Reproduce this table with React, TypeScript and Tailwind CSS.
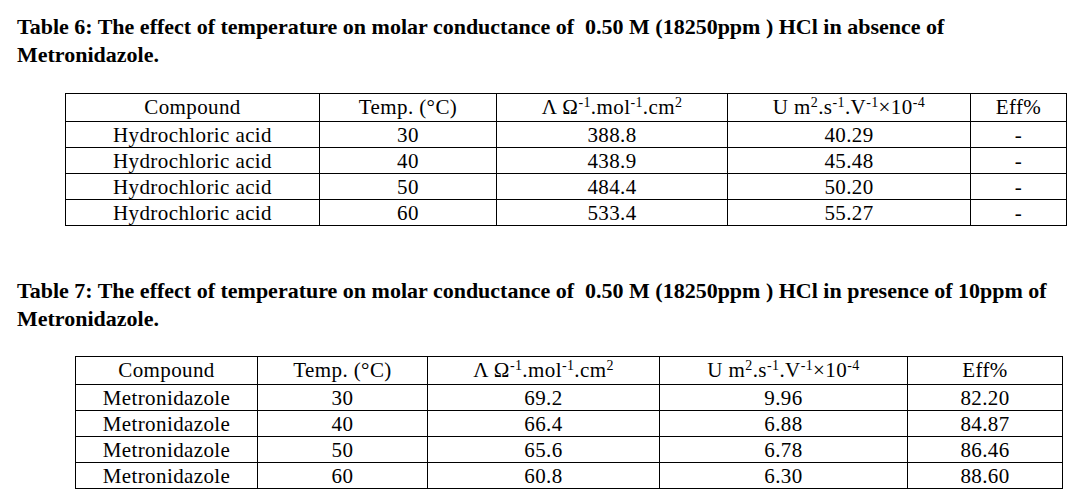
import React from "react";

type Row = [string, string, string, string, string];

const Head = ({ widths }: { widths: string[] }) => (
  <>
    <colgroup>
      {widths.map((w, i) => (
        <col key={i} className={w} />
      ))}
    </colgroup>
    <thead>
      <tr className="h-[28px]">
        <th className="border border-black font-normal p-0 pb-[2px]">Compound</th>
        <th className="border border-black font-normal p-0 pb-[2px]">Temp. (°C)</th>
        <th className="border border-black font-normal p-0 pb-[2px]">
          Λ Ω<sup className="text-[14px]">-1</sup>.mol<sup className="text-[14px]">-1</sup>.cm
          <sup className="text-[14px]">2</sup>
        </th>
        <th className="border border-black font-normal p-0 pb-[2px]">
          U m<sup className="text-[14px]">2</sup>.s<sup className="text-[14px]">-1</sup>.V
          <sup className="text-[14px]">-1</sup>×10<sup className="text-[14px]">-4</sup>
        </th>
        <th className="border border-black font-normal p-0 pb-[2px]">Eff%</th>
      </tr>
    </thead>
  </>
);

const Body = ({ rows }: { rows: Row[] }) => (
  <tbody>
    {rows.map((r, i) => (
      <tr key={i} className="h-[26px]">
        {r.map((c, j) => (
          <td key={j} className="border border-black p-0 text-center">
            {c}
          </td>
        ))}
      </tr>
    ))}
  </tbody>
);

const hcl: Row[] = [
  ["Hydrochloric acid", "30", "388.8", "40.29", "-"],
  ["Hydrochloric acid", "40", "438.9", "45.48", "-"],
  ["Hydrochloric acid", "50", "484.4", "50.20", "-"],
  ["Hydrochloric acid", "60", "533.4", "55.27", "-"],
];

const metro: Row[] = [
  ["Metronidazole", "30", "69.2", "9.96", "82.20"],
  ["Metronidazole", "40", "66.4", "6.88", "84.87"],
  ["Metronidazole", "50", "65.6", "6.78", "86.46"],
  ["Metronidazole", "60", "60.8", "6.30", "88.60"],
];

export default function App() {
  return (
    <div className="w-[1072px] h-[504px] bg-white text-black font-['Liberation_Serif',serif] overflow-hidden">
      <div className="pt-[13px] pl-[17px]">
        <p className="text-[22px] leading-[28px] font-bold whitespace-pre">
          Table 6: The effect of temperature on molar conductance of  0.50 M (18250ppm ) HCl in absence of
        </p>
        <p className="text-[22px] leading-[28px] font-bold">Metronidazole.</p>
      </div>

      <table className="table-fixed ml-[65px] mt-[24px] w-[1002px] text-[21px] leading-[24px] tracking-[0.4px] text-center">
        <Head widths={["w-[254px]", "w-[177px]", "w-[231px]", "w-[243px]", "w-[96px]"]} />
        <Body rows={hcl} />
      </table>

      <div className="pt-[51px] pl-[17px]">
        <p className="text-[22px] leading-[28px] font-bold whitespace-pre">
          Table 7: The effect of temperature on molar conductance of  0.50 M (18250ppm ) HCl in presence of 10ppm of
        </p>
        <p className="text-[22px] leading-[28px] font-bold">Metronidazole.</p>
      </div>

      <table className="table-fixed ml-[75px] mt-[23px] w-[988px] text-[21px] leading-[24px] tracking-[0.4px] text-center">
        <Head widths={["w-[182px]", "w-[170px]", "w-[232px]", "w-[248px]", "w-[155px]"]} />
        <Body rows={metro} />
      </table>
    </div>
  );
}
